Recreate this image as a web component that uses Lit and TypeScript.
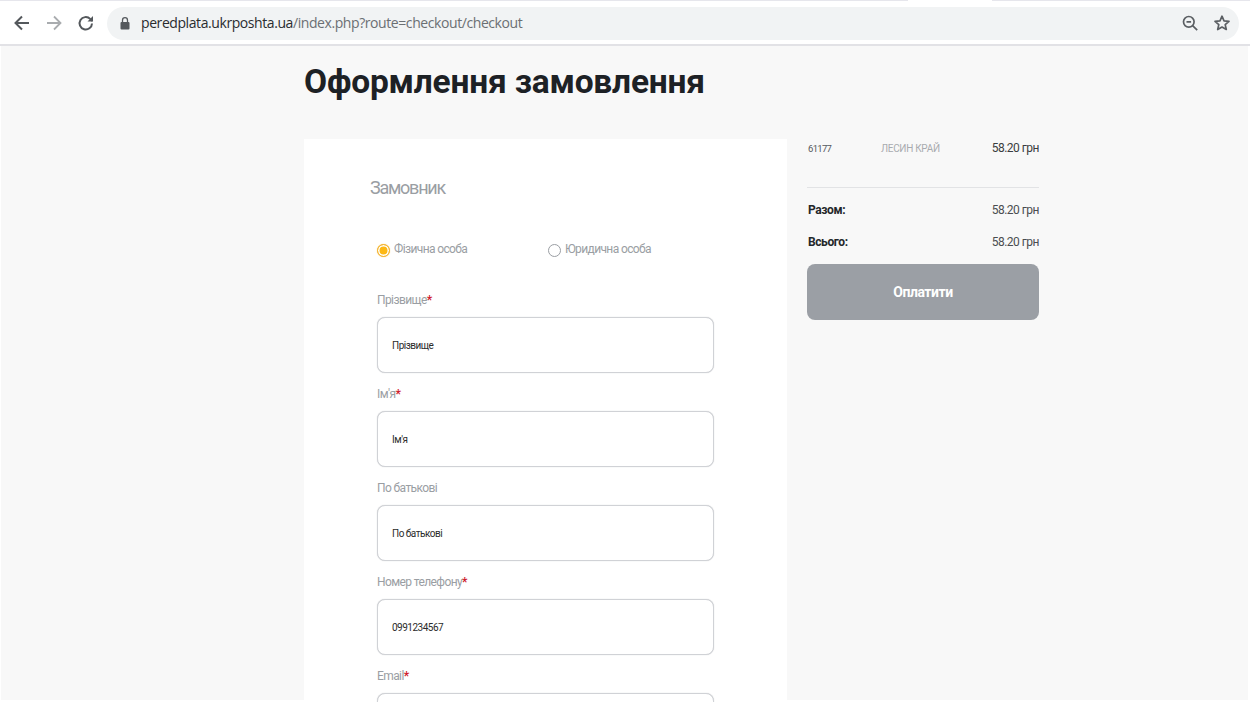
import { LitElement, html, css } from "lit";
import { customElement } from "lit/decorators.js";

const fields = [
  { label: "Прізвище", req: true, value: "Прізвище" },
  { label: "Ім'я", req: true, value: "Ім'я" },
  { label: "По батькові", req: false, value: "По батькові" },
  { label: "Номер телефону", req: true, value: "0991234567" },
  { label: "Email", req: true, value: "" },
];

@customElement("app-root")
export class AppRoot extends LitElement {
  static styles = css`
    :host { display: block; height: 702px; overflow: hidden; background: #f8f8f8; box-shadow: inset 1px -2px #fff, inset -2px 0 #fff; font-family: Roboto, "Liberation Sans", sans-serif; }
    .strip { height: 1px; background: linear-gradient(to right, #e6e6ec 908px, #fff 908px, #fff 992px, #e6e6ec 992px); }
    .top { height: 43px; box-sizing: border-box; background: #fff; display: flex; align-items: center; padding: 0 11px 0 12px; }
    .nav { width: 20px; height: 20px; margin-right: 12px; flex: none; }
    .nav.last { margin-right: 11px; }
    .omni { flex: 1; height: 33px; margin-top: 1px; border-radius: 17px; background: #f1f3f4; display: flex; align-items: center; padding: 0 8px 0 11px; }
    .lock { width: 14px; height: 14px; margin-right: 9px; }
    .url { flex: 1; font: 14px/18px "Open Sans", sans-serif; letter-spacing: -0.42px; color: #6b6f73; margin-top: -1px; }
    .url b { font-weight: 400; color: #2a2c2f; }
    .omni svg.tool { width: 18px; height: 18px; margin-left: 14px; }
    .rule { height: 2px; background: #e2e2e6; }
    .wrap { display: flex; padding-left: 304px; }
    .main { width: 483px; }
    h1 { margin: 0; padding-top: 14px; height: 79px; box-sizing: content-box; font: 700 33.5px/44px Roboto, sans-serif; letter-spacing: -0.2px; color: #1d2125; }
    .card { background: #fff; height: 600px; padding: 37px 0 0 66px; box-sizing: border-box; }
    h2 { margin: 0; font: 400 18px/24px Roboto, sans-serif; letter-spacing: -1.25px; color: #9a9ea3; }
    .radios { display: flex; margin: 36px 0 0 7px; height: 26px; align-items: center; }
    .radio { display: flex; align-items: center; font-size: 12px; letter-spacing: -0.62px; color: #9a9ea3; width: 171px; }
    .dot { width: 11px; height: 11px; border-radius: 50%; border: 1px solid #9a9ea3; margin: 2px 4px 0 0; flex: none; box-sizing: content-box; background: #fff; }
    .dot.on { border-color: #f4b73c; background: #fdb813; box-shadow: inset 0 0 0 1.5px #fff, 0 0 1px #f4b73c; }
    .fields { margin: 27px 0 0 7px; width: 337px; display: flex; flex-direction: column; gap: 0; }
    .field { height: 94px; }
    .label { height: 24px; margin-top: 4px; font-size: 12px; line-height: 14px; letter-spacing: -0.6px; color: #9a9ea3; }
    .label i { font-style: normal; color: #d01c2c; font-weight: 700; }
    .input { height: 56px; box-sizing: border-box; border: 1px solid #d0d2d6; border-radius: 8px; background: #fff; box-shadow: 0 0 1px #c4c6ca; display: flex; align-items: center; padding-left: 14px; font-size: 10px; letter-spacing: -0.5px; color: #2b2b2b; }
    .side { width: 232px; margin-left: 20px; padding-top: 93px; display: flex; flex-direction: column; }
    .line1 { display: flex; align-items: center; height: 18px; padding-left: 1px; font-size: 12px; letter-spacing: -0.5px; color: #3a3d40; }
    .code { width: 73px; font-size: 9.5px; letter-spacing: -0.7px; color: #55595d; }
    .name { flex: 1; font-size: 10px; letter-spacing: -0.3px; color: #a8abaf; }
    .hr { height: 1px; background: #e2e3e5; margin: 30px 0 13px; }
    .rows { display: flex; flex-direction: column; gap: 14px; }
    .row { display: flex; justify-content: space-between; align-items: center; height: 18px; padding-left: 1px; font-size: 12px; letter-spacing: -0.5px; color: #4a4d50; }
    .row b { color: #24272a; font-weight: 700; font-size: 12px; letter-spacing: -0.4px; }
    .pay { height: 56px; margin-top: 13px; border-radius: 8px; background: #9b9fa5; color: #fff; font-size: 14px; font-weight: 700; display: flex; align-items: center; justify-content: center; letter-spacing: -0.45px; }
  `;

  render() {
    return html`
      <div class="strip"></div>
      <div class="top">
        <svg class="nav" viewBox="0 0 20 20" fill="none" stroke="#54585c" stroke-width="2"><path d="M17 10H4M10 3.5 3.5 10l6.5 6.5"/></svg>
        <svg class="nav" viewBox="0 0 20 20" fill="none" stroke="#a9acaf" stroke-width="1.8"><path d="M3 10h13M10 3.5l6.5 6.5-6.5 6.5"/></svg>
        <svg class="nav last" viewBox="0 0 20 20" fill="none" stroke="#54585c" stroke-width="2"><path d="M16 10.5a6.2 6.2 0 1 1-1.8-4.6L16.5 8"/><path d="M17 3v5.5h-5.5" fill="#54585c" stroke="none"/></svg>
        <div class="omni">
          <svg class="lock" viewBox="0 0 14 14"><rect x="2.5" y="6" width="9" height="7.5" rx="1" fill="#55595d"/><path d="M4.5 6V4.2a2.5 2.5 0 0 1 5 0V6" fill="none" stroke="#55595d" stroke-width="1.3"/></svg>
          <span class="url"><b>peredplata.ukrposhta.ua</b>/index.php?route=checkout/checkout</span>
          <svg class="tool" viewBox="0 0 18 18" fill="none" stroke="#5b5f63" stroke-width="1.7"><circle cx="7.8" cy="7.8" r="5.3"/><path d="M5.5 7.8h4.6M11.6 11.6l4.6 4.6"/></svg>
          <svg class="tool" viewBox="0 0 18 18" fill="none" stroke="#5b5f63" stroke-width="1.7"><path d="M9 2.2l2 4.6 5 .5-3.8 3.3 1.1 4.9L9 13l-4.3 2.5 1.1-4.9L2 7.3l5-.5z" stroke-linejoin="round"/></svg>
        </div>
      </div>
      <div class="rule"></div>
      <div class="wrap">
        <div class="main">
          <h1>Оформлення замовлення</h1>
          <div class="card">
            <h2>Замовник</h2>
            <div class="radios">
              <div class="radio"><span class="dot on"></span>Фізична особа</div>
              <div class="radio"><span class="dot"></span>Юридична особа</div>
            </div>
            <div class="fields">
              ${fields.map(
                (f) => html`<div class="field">
                  <div class="label">${f.label}${f.req ? html`<i>*</i>` : ""}</div>
                  <div class="input">${f.value}</div>
                </div>`
              )}
            </div>
          </div>
        </div>
        <div class="side">
          <div class="line1"><span class="code">61177</span><span class="name">ЛЕСИН КРАЙ</span><span>58.20 грн</span></div>
          <div class="hr"></div>
          <div class="rows">
            <div class="row"><b>Разом:</b><span>58.20 грн</span></div>
            <div class="row"><b>Всього:</b><span>58.20 грн</span></div>
          </div>
          <div class="pay">Оплатити</div>
        </div>
      </div>
    `;
  }
}
